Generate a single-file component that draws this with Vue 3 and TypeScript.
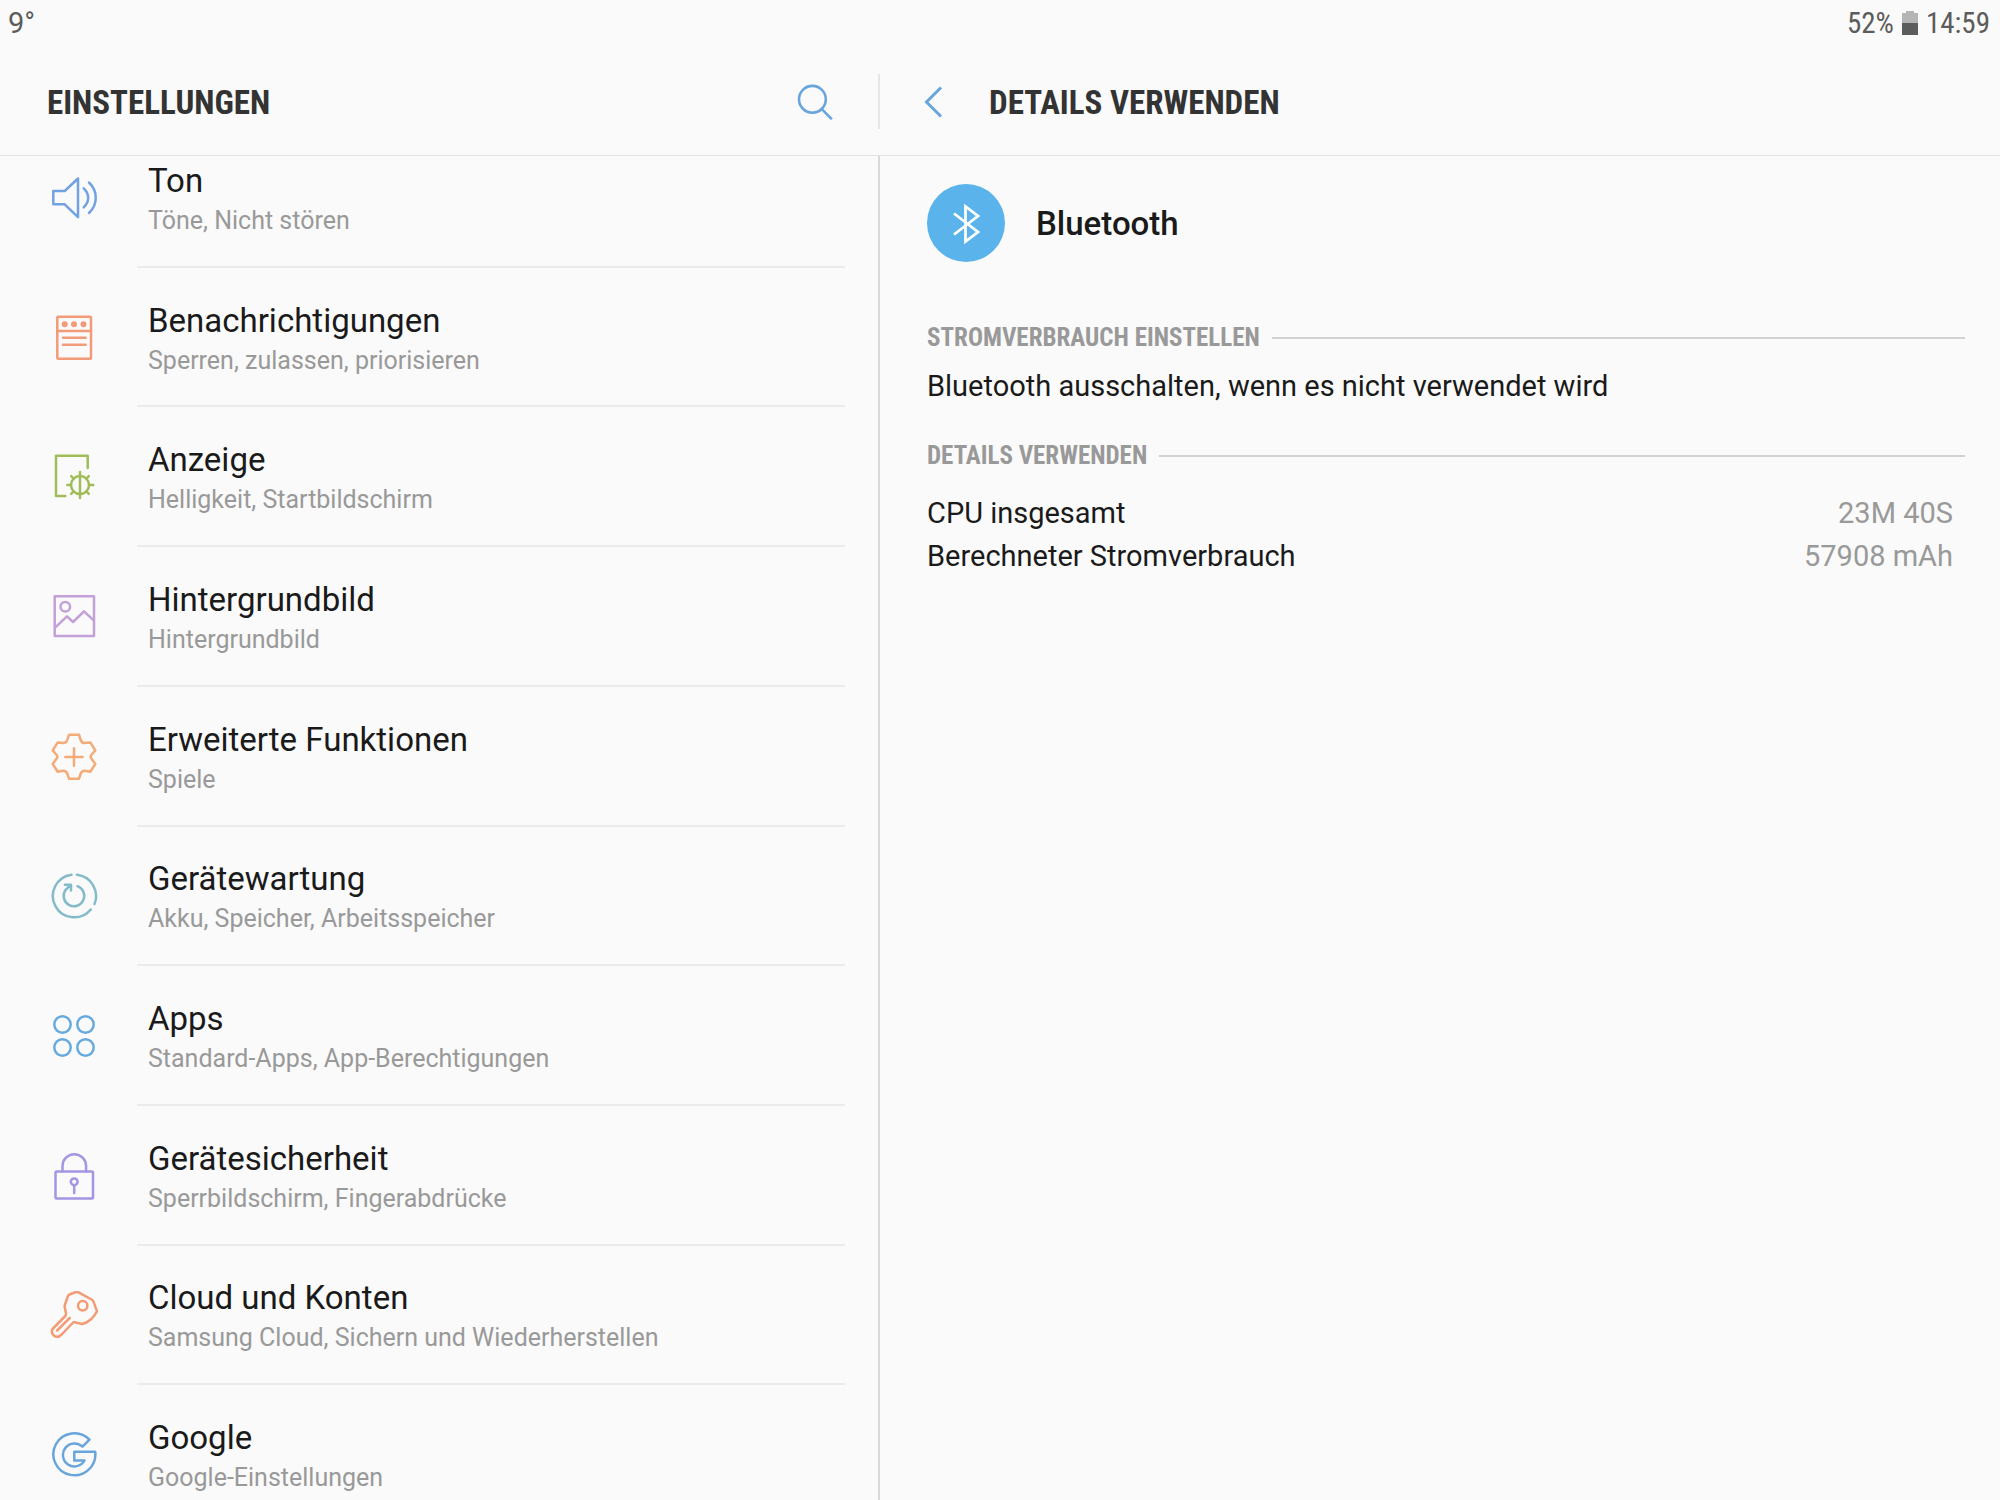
<script setup lang="ts">
type IconName =
  | 'sound'
  | 'notifications'
  | 'display'
  | 'wallpaper'
  | 'advanced'
  | 'maintenance'
  | 'apps'
  | 'security'
  | 'cloud'
  | 'google'

interface SettingsItem {
  icon: IconName
  title: string
  summary: string
}

interface UsageDetail {
  label: string
  value: string
}

const items: SettingsItem[] = [
  { icon: 'sound', title: 'Ton', summary: 'Töne, Nicht stören' },
  { icon: 'notifications', title: 'Benachrichtigungen', summary: 'Sperren, zulassen, priorisieren' },
  { icon: 'display', title: 'Anzeige', summary: 'Helligkeit, Startbildschirm' },
  { icon: 'wallpaper', title: 'Hintergrundbild', summary: 'Hintergrundbild' },
  { icon: 'advanced', title: 'Erweiterte Funktionen', summary: 'Spiele' },
  { icon: 'maintenance', title: 'Gerätewartung', summary: 'Akku, Speicher, Arbeitsspeicher' },
  { icon: 'apps', title: 'Apps', summary: 'Standard-Apps, App-Berechtigungen' },
  { icon: 'security', title: 'Gerätesicherheit', summary: 'Sperrbildschirm, Fingerabdrücke' },
  { icon: 'cloud', title: 'Cloud und Konten', summary: 'Samsung Cloud, Sichern und Wiederherstellen' },
  { icon: 'google', title: 'Google', summary: 'Google-Einstellungen' },
]

const details: UsageDetail[] = [
  { label: 'CPU insgesamt', value: '23M 40S' },
  { label: 'Berechneter Stromverbrauch', value: '57908 mAh' },
]
</script>

<template>
  <div class="screen">
    <div class="status-bar">
      <span class="temperature">9°</span>
      <span class="status-right">
        <span>52%</span>
        <svg class="battery" viewBox="0 0 16 24" aria-hidden="true">
          <path d="M0 2h4V0h8v2h4v10H0z" fill="#b5b5b5" />
          <path d="M0 12h16v12H0z" fill="#5c5c5c" />
        </svg>
        <time>14:59</time>
      </span>
    </div>

    <header class="app-bar">
      <div class="bar-left">
        <h1 class="bar-title">EINSTELLUNGEN</h1>
        <button class="icon-button" type="button" aria-label="Suchen">
          <svg viewBox="0 0 36 36" class="bar-icon">
            <circle cx="15.4" cy="15.3" r="13.4" />
            <path d="M24.8 25.2l10 10" />
          </svg>
        </button>
      </div>
      <div class="bar-right">
        <button class="icon-button" type="button" aria-label="Zurück">
          <svg viewBox="0 0 36 36" class="bar-icon back">
            <path d="M19 3.500L4.500 18 19 32.500" />
          </svg>
        </button>
        <h2 class="bar-title">DETAILS VERWENDEN</h2>
      </div>
    </header>

    <div class="panes">
      <nav class="list-pane">
        <ul class="settings-list">
          <li v-for="item in items" :key="item.icon" class="settings-row">
            <a href="#" class="row-link">
              <svg class="row-icon" :class="item.icon" viewBox="0 0 48 48" aria-hidden="true">
                <template v-if="item.icon === 'sound'">
                  <path d="M3.300 17v13.300h11.400L28 43.200V4.500L14.700 17z" />
                  <path d="M33.700 14.300c6 5.500 6 13.500 0 19M39 8.500c9 8.500 9 22 0 30.500" />
                </template>
                <template v-else-if="item.icon === 'notifications'">
                  <rect x="7.300" y="2.700" width="33.700" height="42" rx="1" />
                  <path d="M7.300 17H41M13 23.700h22.700M13 30.700h22.700" />
                  <g class="dots">
                    <circle cx="14.700" cy="10.300" r="3" />
                    <circle cx="24" cy="10.300" r="3" />
                    <circle cx="33.500" cy="10.300" r="3" />
                  </g>
                </template>
                <template v-else-if="item.icon === 'display'">
                  <path d="M37.700 15V2.700H6V43h9.300" />
                  <circle cx="30" cy="32" r="9" />
                  <path d="M30 19v26M17.300 32H21M39 32h4.300M21.200 23.200l2.400 2.400M38.800 23.200l-2.400 2.400M21.200 40.800l2.400-2.400M38.800 40.800l-2.400-2.400" />
                </template>
                <template v-else-if="item.icon === 'wallpaper'">
                  <rect x="4.700" y="3.300" width="39.300" height="39.700" />
                  <circle cx="15.300" cy="13.700" r="4.800" />
                  <path d="M5 34.700l12-11.400 6 5.700 11-10.700 10 9.400" />
                </template>
                <template v-else-if="item.icon === 'advanced'">
                  <path d="M19 1.700h10l1.700 5.300q.8 2.600 3.600 3l6-.6 5 8-4 4.600q-1.200 1.600 0 3.400l4 5.600-5 7.700-5.600-.9q-3 .2-3.900 2.700L29 45.700H19l-1.800-5.200q-.9-2.500-3.900-2.700l-5.600.9-5-7.700 4-5.600q1.200-1.800 0-3.400l-4-4.600 5-8 6 .6q2.800-.4 3.600-3z" />
                  <path d="M24 15.300v17.400M15.300 24h17.400" />
                </template>
                <template v-else-if="item.icon === 'maintenance'">
                  <path d="M27 2.800A21.400 21.400 0 0 1 44.500 32M40.800 37.500A21.400 21.400 0 1 1 21.500 2.700" />
                  <path d="M27.500 14.200A10.300 10.300 0 1 1 15.500 18L20.500 13.200M14.800 12.800H21V18.500" />
                </template>
                <template v-else-if="item.icon === 'apps'">
                  <circle cx="12.500" cy="12.500" r="8.200" />
                  <circle cx="35.500" cy="12.500" r="8.200" />
                  <circle cx="12.500" cy="35.500" r="8.200" />
                  <circle cx="35.500" cy="35.500" r="8.200" />
                </template>
                <template v-else-if="item.icon === 'security'">
                  <rect x="5.500" y="19.500" width="37.500" height="27" rx="1" />
                  <path d="M12.500 19.500V14a11.800 11.800 0 0 1 23.600 0v5.500M24.200 33.200V41" />
                  <circle cx="24.200" cy="29.800" r="3.400" />
                </template>
                <template v-else-if="item.icon === 'cloud'">
                  <path d="M20 3.200L25.500 1.300Q27.500.7 29.500 1.800L41.500 8.500Q43 9.400 43.600 10.800L47 20.300Q45 24.500 41 28.300 36.500 32.200 32.300 33L24.600 31.300Q23.400 31.100 22.600 32L11.700 43.500Q7.500 47.500 3.700 44.500 0 40.500 3.500 37L15.300 25Q16.300 23.700 16 22.500L14.600 15.500Q14.500 14.500 15 13.500L18 5Q18.600 3.700 20 3.200z" />
                  <circle cx="32.700" cy="14.700" r="4.700" />
                  <path d="M7 39.700L19.700 27" />
                </template>
                <template v-else>
                  <path d="M39.500 8.700A21 21 0 1 0 45.200 20.700H24.300V29.500H34.500A11.500 11.500 0 1 1 32.500 15.700z" />
                </template>
              </svg>
              <span class="row-text">
                <span class="row-title">{{ item.title }}</span>
                <span class="row-summary">{{ item.summary }}</span>
              </span>
            </a>
          </li>
        </ul>
      </nav>

      <main class="detail-pane">
        <div class="app-heading">
          <svg class="app-icon" viewBox="0 0 78 78" aria-hidden="true">
            <circle cx="39" cy="39" r="39" fill="#5ab3eb" />
            <path d="M27 29.500L51 48 38.500 57.500V22.500L51 32 27 50.500" fill="none" stroke="#fff" stroke-width="2.800" />
          </svg>
          <h3 class="app-name">Bluetooth</h3>
        </div>

        <section>
          <h4 class="section-title">STROMVERBRAUCH EINSTELLEN</h4>
          <p class="tip">Bluetooth ausschalten, wenn es nicht verwendet wird</p>
        </section>

        <section>
          <h4 class="section-title">DETAILS VERWENDEN</h4>
          <dl class="usage">
            <div v-for="detail in details" :key="detail.label" class="usage-row">
              <dt>{{ detail.label }}</dt>
              <dd>{{ detail.value }}</dd>
            </div>
          </dl>
        </section>
      </main>
    </div>
  </div>
</template>

<style>
body {
  background: #fafafa;
}
</style>

<style scoped>
.screen {
  display: flex;
  flex-direction: column;
  height: 100vh;
  overflow: hidden;
  background: #fafafa;
  color: #1a1a1a;
  font-family: Roboto, "Liberation Sans", sans-serif;
}

h1,
h2,
h3,
h4,
p,
ul,
dl,
dd {
  margin: 0;
  padding: 0;
}

.status-bar {
  display: flex;
  flex: none;
  align-items: center;
  justify-content: space-between;
  height: 46px;
  padding: 0 10px 0 8px;
  color: #5c5c5c;
  font-size: 29px;
}

.status-right {
  display: flex;
  align-items: center;
  gap: 8px;
  font-family: "Roboto Condensed", Roboto, sans-serif;
}

.battery {
  width: 16px;
  height: 24px;
}

.app-bar {
  display: flex;
  flex: none;
  height: 109px;
  border-bottom: 1px solid #e2e2e2;
}

.bar-left,
.bar-right {
  display: flex;
  box-sizing: border-box;
  align-items: center;
  height: 55px;
  margin-top: 28px;
}

.bar-left {
  width: 44%;
  justify-content: space-between;
  padding: 0 45px 0 47px;
  border-right: 2px solid #e6e6e6;
}

.bar-right {
  flex: 1;
  gap: 31px;
  padding-left: 42px;
}

.bar-title {
  padding-top: 2px;
  color: #333;
  font-family: "Roboto Condensed", Roboto, sans-serif;
  font-size: 33px;
  font-weight: 700;
  line-height: 40px;
}

.icon-button {
  display: flex;
  padding: 0;
  border: 0;
  background: none;
}

.bar-icon {
  width: 36px;
  height: 36px;
  fill: none;
  stroke: #68a5dc;
  stroke-width: 2.6;
}

.back {
  stroke-width: 3;
}

.panes {
  display: flex;
  flex: 1;
  min-height: 0;
}

.list-pane {
  display: flex;
  box-sizing: border-box;
  flex-direction: column;
  width: 44%;
  overflow: hidden;
  border-right: 2px solid #d9d9d9;
}

/* The list is scrolled: its first and last rows run past the pane's edges. */
.settings-list {
  display: flex;
  flex: 1 0 auto;
  flex-direction: column;
  margin: -28px 0 -25px;
  list-style: none;
}

.settings-row {
  display: flex;
  flex: 1 0 0;
}

.row-link {
  display: flex;
  flex: 1;
  align-items: center;
  gap: 39px;
  padding: 0 33px 0 50px;
  color: inherit;
  text-decoration: none;
}

.row-icon {
  flex: none;
  width: 48px;
  height: 48px;
  fill: none;
  stroke: currentColor;
  stroke-width: 2.5;
  stroke-linecap: round;
  stroke-linejoin: round;
}

.dots {
  fill: currentColor;
  stroke: none;
}

.sound {
  color: #72a2e2;
}

.notifications {
  color: #f39a78;
}

.display {
  color: #9fbd58;
}

.wallpaper {
  color: #c3a0d8;
}

.advanced {
  color: #f3ab78;
}

.maintenance {
  color: #84bbc9;
}

.apps {
  color: #67abde;
}

.security {
  color: #a595e2;
}

.cloud {
  color: #f49b76;
}

.google {
  color: #68a5dc;
}

.row-text {
  display: flex;
  flex: 1;
  flex-direction: column;
  align-self: stretch;
  justify-content: center;
  padding: 4px 0 0 11px;
  border-bottom: 2px solid #ebebeb;
}

.row-title {
  font-size: 33px;
  line-height: 44px;
}

.row-summary {
  color: #999;
  font-size: 25px;
  line-height: 36px;
}

.detail-pane {
  flex: 1;
  padding: 28px 35px 0 47px;
}

.app-heading {
  display: flex;
  align-items: center;
  gap: 31px;
  margin-bottom: 60px;
}

.app-icon {
  width: 78px;
  height: 78px;
}

.app-name {
  padding-top: 2px;
  font-size: 33px;
  font-weight: 500;
  line-height: 40px;
}

.section-title {
  display: flex;
  align-items: center;
  gap: 12px;
  color: #999;
  font-family: "Roboto Condensed", Roboto, sans-serif;
  font-size: 25px;
  font-weight: 700;
  line-height: 32px;
}

.section-title::after {
  flex: 1;
  height: 2px;
  background: #d2d2d2;
  content: "";
}

.tip {
  margin: 11px 0 32px;
  font-size: 29px;
  line-height: 43px;
}

.usage {
  margin-top: 20px;
  padding-right: 12px;
  font-size: 29px;
  line-height: 43px;
}

.usage-row {
  display: flex;
  justify-content: space-between;
}

.usage dd {
  color: #999;
}
</style>
